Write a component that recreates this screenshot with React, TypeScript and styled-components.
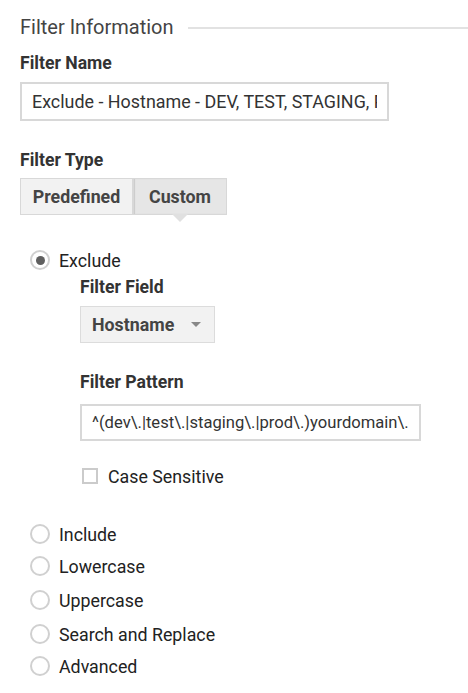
import styled, { createGlobalStyle } from "styled-components";

const GlobalStyle = createGlobalStyle`
  body {
    margin: 0;
    background: #fff;
    font-family: Roboto, "Noto Sans", sans-serif;
    color: #222;
  }
`;

const Page = styled.div`
  width: 468px;
  height: 693px;
  overflow: hidden;
  padding: 14px 0 0 20px;
  box-sizing: border-box;
`;

const SectionHeader = styled.div`
  display: flex;
  align-items: center;
  gap: 14px;
  font-size: 20px;
  color: #444;
  height: 26px;
  &::after {
    content: "";
    flex: 1;
    height: 2px;
    background: #e2e2e2;
    margin-top: 2px;
  }
`;

const Label = styled.div<{ $top?: number }>`
  font-size: 17.6px;
  font-weight: 700;
  color: #333;
  margin-top: ${(p) => p.$top ?? 0}px;
  line-height: 22px;
  height: 22px;
`;

const TextBox = styled.div<{ $width: number; $size: number; $top: number }>`
  width: ${(p) => p.$width}px;
  height: ${(p) => (p.$size > 17 ? 39 : 37)}px;
  box-sizing: border-box;
  border: 2px solid #d8d8d8;
  padding: 0 10px;
  font-size: ${(p) => p.$size}px;
  color: #333;
  display: flex;
  align-items: center;
  margin-top: ${(p) => p.$top}px;
`;

const Value = styled.span`
  flex: 1;
  white-space: nowrap;
  overflow: hidden;
`;

const ToggleGroup = styled.div`
  display: flex;
  margin-top: 7px;
`;

const ToggleButton = styled.div<{ $active?: boolean; $width: number }>`
  position: relative;
  width: ${(p) => p.$width}px;
  height: 37px;
  box-sizing: border-box;
  display: flex;
  align-items: center;
  justify-content: center;
  font-size: 17.8px;
  font-weight: 700;
  color: #444;
  background: ${(p) => (p.$active ? "#e6e6e6" : "#f2f2f2")};
  border: 1px solid #d8d8d8;
  ${(p) =>
    p.$active &&
    `
    box-shadow: inset 1px 0 1px rgba(0, 0, 0, 0.12);
    &::after {
      content: "";
      position: absolute;
      left: 50%;
      bottom: -8px;
      margin-left: -8px;
      border-left: 8px solid transparent;
      border-right: 8px solid transparent;
      border-top: 8px solid #e0e0e0;
    }
  `}
`;

const RadioRow = styled.div<{ $top?: number }>`
  display: flex;
  align-items: center;
  height: 24px;
  margin-top: ${(p) => p.$top ?? 0}px;
  margin-left: 10px;
  font-size: 17.8px;
  color: #222;
`;

const Radio = styled.span<{ $checked?: boolean }>`
  width: 20px;
  height: 20px;
  box-sizing: border-box;
  border-radius: 50%;
  border: 2px solid #d0d0d0;
  margin-right: 9px;
  display: flex;
  align-items: center;
  justify-content: center;
  &::before {
    content: "";
    width: 9px;
    height: 9px;
    border-radius: 50%;
    background: ${(p) => (p.$checked ? "#5f5f5f" : "transparent")};
  }
`;

const Nested = styled.div`
  padding-left: 60px;
`;

const Select = styled.div`
  width: 135px;
  height: 37px;
  box-sizing: border-box;
  margin-top: 8px;
  border: 1px solid #dcdcdc;
  background: #f2f2f2;
  display: flex;
  align-items: center;
  justify-content: space-between;
  padding: 0 13px 0 11px;
  font-size: 17.8px;
  font-weight: 700;
  color: #444;
  &::after {
    content: "";
    border-left: 5px solid transparent;
    border-right: 5px solid transparent;
    border-top: 5px solid #888;
  }
`;

const CheckRow = styled.div`
  display: flex;
  align-items: center;
  margin: 25px 0 0 2px;
  font-size: 17.8px;
  color: #222;
  height: 20px;
`;

const Checkbox = styled.span`
  width: 16px;
  height: 16px;
  box-sizing: border-box;
  border: 2px solid #cbcbcb;
  margin-right: 10px;
`;

const others = [
  { label: "Include", top: 36 },
  { label: "Lowercase", top: 8 },
  { label: "Uppercase", top: 10 },
  { label: "Search and Replace", top: 10 },
  { label: "Advanced", top: 8 },
];

export default function App() {
  return (
    <Page>
      <GlobalStyle />
      <SectionHeader>Filter Information</SectionHeader>
      <Label $top={12}>Filter Name</Label>
      <TextBox $width={369} $size={17.9} $top={8}>
        <Value>Exclude - Hostname - DEV, TEST, STAGING, PROD</Value>
      </TextBox>
      <Label $top={28}>Filter Type</Label>
      <ToggleGroup>
        <ToggleButton $width={113}>Predefined</ToggleButton>
        <ToggleButton $width={94} $active>
          Custom
        </ToggleButton>
      </ToggleGroup>
      <RadioRow $top={33}>
        <Radio $checked />
        Exclude
      </RadioRow>
      <Nested>
        <Label $top={4}>Filter Field</Label>
        <Select>Hostname</Select>
        <Label $top={28}>Filter Pattern</Label>
        <TextBox $width={341} $size={16.6} $top={11}>
          <Value>^(dev\.|test\.|staging\.|prod\.)yourdomain\.com$</Value>
        </TextBox>
        <CheckRow>
          <Checkbox />
          Case Sensitive
        </CheckRow>
      </Nested>
      {others.map((o) => (
        <RadioRow key={o.label} $top={o.top}>
          <Radio />
          {o.label}
        </RadioRow>
      ))}
    </Page>
  );
}
